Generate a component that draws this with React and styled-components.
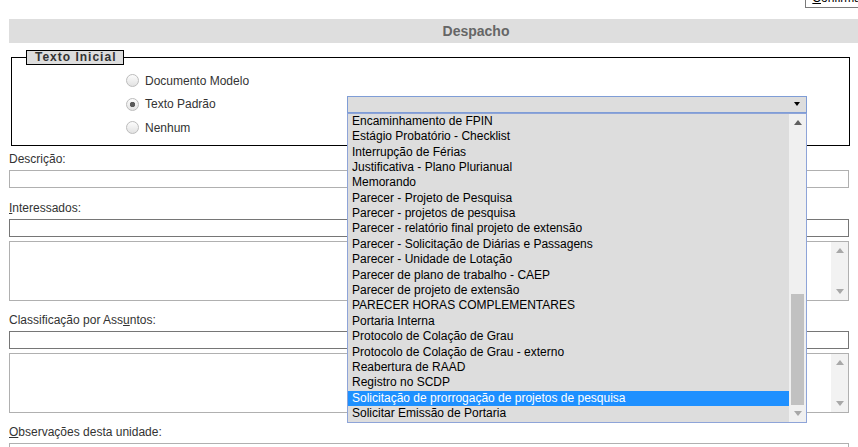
import React from "react";
import styled, { createGlobalStyle } from "styled-components";

const GlobalStyle = createGlobalStyle`
  html, body {
    margin: 0;
    padding: 0;
    overflow: hidden;
    background: #fff;
  }
  body {
    font-family: "Liberation Sans", Arial, sans-serif;
    font-size: 12px;
    color: #333;
  }
`;

const modelos = [
  "Encaminhamento de FPIN",
  "Estágio Probatório - Checklist",
  "Interrupção de Férias",
  "Justificativa - Plano Plurianual",
  "Memorando",
  "Parecer - Projeto de Pesquisa",
  "Parecer - projetos de pesquisa",
  "Parecer - relatório final projeto de extensão",
  "Parecer - Solicitação de Diárias e Passagens",
  "Parecer - Unidade de Lotação",
  "Parecer de plano de trabalho - CAEP",
  "Parecer de projeto de extensão",
  "PARECER HORAS COMPLEMENTARES",
  "Portaria Interna",
  "Protocolo de Colação de Grau",
  "Protocolo de Colação de Grau - externo",
  "Reabertura de RAAD",
  "Registro no SCDP",
  "Solicitação de prorrogação de projetos de pesquisa",
  "Solicitar Emissão de Portaria",
];

const Page = styled.div`
  width: 858px;
  padding-left: 9px;
  box-sizing: border-box;
`;

const Toolbar = styled.div`
  display: flex;
  justify-content: flex-end;
  height: 19px;
  margin-right: -14px;
`;

const ConfirmButton = styled.button`
  margin-top: -12px;
  height: 20px;
  padding: 0 6px;
  font: 12px "Liberation Sans", Arial, sans-serif;
  color: #000;
  background: #fff;
  border: 1px solid #7a7a7a;
`;

const TitleBar = styled.div`
  width: 934px;
  height: 24px;
  line-height: 24px;
  background: #dedede;
  color: #666;
  font-weight: bold;
  font-size: 14px;
  text-align: center;
`;

const Box = styled.fieldset`
  margin: 7px 0 6px 2px;
  width: 839px;
  min-width: 0;
  box-sizing: border-box;
  border: 1px solid #000;
  padding: 4px 0 5px 14px;
`;

const Legend = styled.legend`
  padding: 0 7px 0 8px;
  border: 1px solid #000;
  background: #ddd;
  color: #333;
  font-weight: bold;
  font-size: 12px;
  line-height: 13px;
  letter-spacing: 1px;
`;

const OptionGrid = styled.div`
  display: grid;
  grid-template-columns: 221px 460px;
  grid-auto-rows: 23.5px;
  align-items: center;
  margin-left: 100px;
`;

const RadioLabel = styled.label`
  display: flex;
  align-items: center;
  gap: 6px;
  color: #333;
`;

const Radio = styled.input.attrs({ type: "radio" })`
  appearance: none;
  margin: 0;
  width: 13px;
  height: 13px;
  border-radius: 50%;
  box-sizing: border-box;
  border: 1px solid #bcbcbc;
  background: linear-gradient(#fcfcfc, #e2e2e2);
  &:checked {
    background: radial-gradient(circle, #5a5a5a 0 2.4px, transparent 3px),
      linear-gradient(#fcfcfc, #e2e2e2);
  }
`;

const SelectBox = styled.div`
  position: relative;
  height: 17px;
  box-sizing: border-box;
  border: 1px solid #7f9dd6;
  background: #dddddd;
  display: flex;
  align-items: center;
  justify-content: flex-end;
  padding-right: 6px;
`;

const Tri = styled.span`
  width: 0;
  height: 0;
  border-left: ${(p) => p.$size}px solid transparent;
  border-right: ${(p) => p.$size}px solid transparent;
  ${(p) => (p.$down ? "border-top" : "border-bottom")}: ${(p) => p.$size + 1}px solid
    ${(p) => p.$color};
`;

const Dropdown = styled.div`
  position: absolute;
  top: calc(100% + 1px);
  left: -1px;
  width: 460px;
  height: 310px;
  box-sizing: border-box;
  border: 1px solid #8ea4d8;
  background: #dddddd;
  display: flex;
  z-index: 10;
`;

const OptionList = styled.div`
  flex: 1;
  overflow: hidden;
`;

const Option = styled.div`
  height: 15.4px;
  line-height: 15.4px;
  padding-left: 4px;
  white-space: nowrap;
  font-size: 12px;
  color: ${(p) => (p.$selected ? "#fff" : "#000")};
  background: ${(p) => (p.$selected ? "#1e90ff" : "transparent")};
`;

const ListScroll = styled.div`
  width: 17px;
  background: #f0f0f0;
  display: flex;
  flex-direction: column;
`;

const ScrollButton = styled.div`
  height: 17px;
  display: flex;
  align-items: center;
  justify-content: center;
`;

const Track = styled.div`
  flex: 1;
  padding: 0 2px;
`;

const Thumb = styled.div`
  margin-top: 163px;
  height: 111px;
  background: #c1c1c1;
`;

const Field = styled.div`
  margin-top: ${(p) => p.$gap ?? 12}px;
`;

const Label = styled.label`
  display: block;
  line-height: 14px;
  margin-bottom: 4px;
  color: #333;
`;

const TextInput = styled.input`
  display: block;
  width: 840px;
  height: 18px;
  box-sizing: border-box;
  margin: 0;
  padding: 0 3px;
  border: 1px solid ${(p) => (p.$dark ? "#767676" : "#b0b0b0")};
  font: 12px "Liberation Sans", Arial, sans-serif;
  outline: none;
`;

const AreaBox = styled.div`
  display: flex;
  width: 840px;
  height: 60px;
  margin-top: 4px;
  box-sizing: border-box;
  border: 1px solid #b0b0b0;
`;

const Area = styled.textarea`
  flex: 1;
  border: 0;
  margin: 0;
  resize: none;
  outline: none;
  overflow: hidden;
  font: 12px "Liberation Sans", Arial, sans-serif;
`;

const AreaRail = styled.div`
  width: 17px;
  background: #f2f2f2;
  display: flex;
  flex-direction: column;
  justify-content: space-between;
`;

function TextBox() {
  return (
    <AreaBox>
      <Area />
      <AreaRail>
        <ScrollButton>
          <Tri $size={4} $color="#a8a8a8" />
        </ScrollButton>
        <ScrollButton>
          <Tri $size={4} $down $color="#a8a8a8" />
        </ScrollButton>
      </AreaRail>
    </AreaBox>
  );
}

export default function App() {
  const selected = "Solicitação de prorrogação de projetos de pesquisa";
  return (
    <Page>
      <GlobalStyle />
      <Toolbar>
        <ConfirmButton>
          <u>C</u>onfirmar
        </ConfirmButton>
      </Toolbar>
      <TitleBar>Despacho</TitleBar>

      <Box>
        <Legend>Texto Inicial</Legend>
        <OptionGrid>
          <RadioLabel>
            <Radio name="texto" />
            Documento Modelo
          </RadioLabel>
          <span />
          <RadioLabel>
            <Radio name="texto" defaultChecked />
            Texto Padrão
          </RadioLabel>
          <SelectBox>
            <Tri $size={3.5} $down $color="#000" />
            <Dropdown>
              <OptionList>
                {modelos.map((m) => (
                  <Option key={m} $selected={m === selected}>
                    {m}
                  </Option>
                ))}
              </OptionList>
              <ListScroll>
                <ScrollButton>
                  <Tri $size={4} $color="#606060" />
                </ScrollButton>
                <Track>
                  <Thumb />
                </Track>
                <ScrollButton>
                  <Tri $size={4} $down $color="#a8a8a8" />
                </ScrollButton>
              </ListScroll>
            </Dropdown>
          </SelectBox>
          <RadioLabel>
            <Radio name="texto" />
            Nenhum
          </RadioLabel>
          <span />
        </OptionGrid>
      </Box>

      <Field $gap={0}>
        <Label>Descrição:</Label>
        <TextInput />
      </Field>

      <Field $gap={13}>
        <Label>
          <u>I</u>nteressados:
        </Label>
        <TextInput $dark />
        <TextBox />
      </Field>

      <Field>
        <Label>
          Classificação por Ass<u>u</u>ntos:
        </Label>
        <TextInput $dark />
        <TextBox />
      </Field>

      <Field>
        <Label>
          <u>O</u>bservações desta unidade:
        </Label>
        <TextInput />
      </Field>
    </Page>
  );
}
